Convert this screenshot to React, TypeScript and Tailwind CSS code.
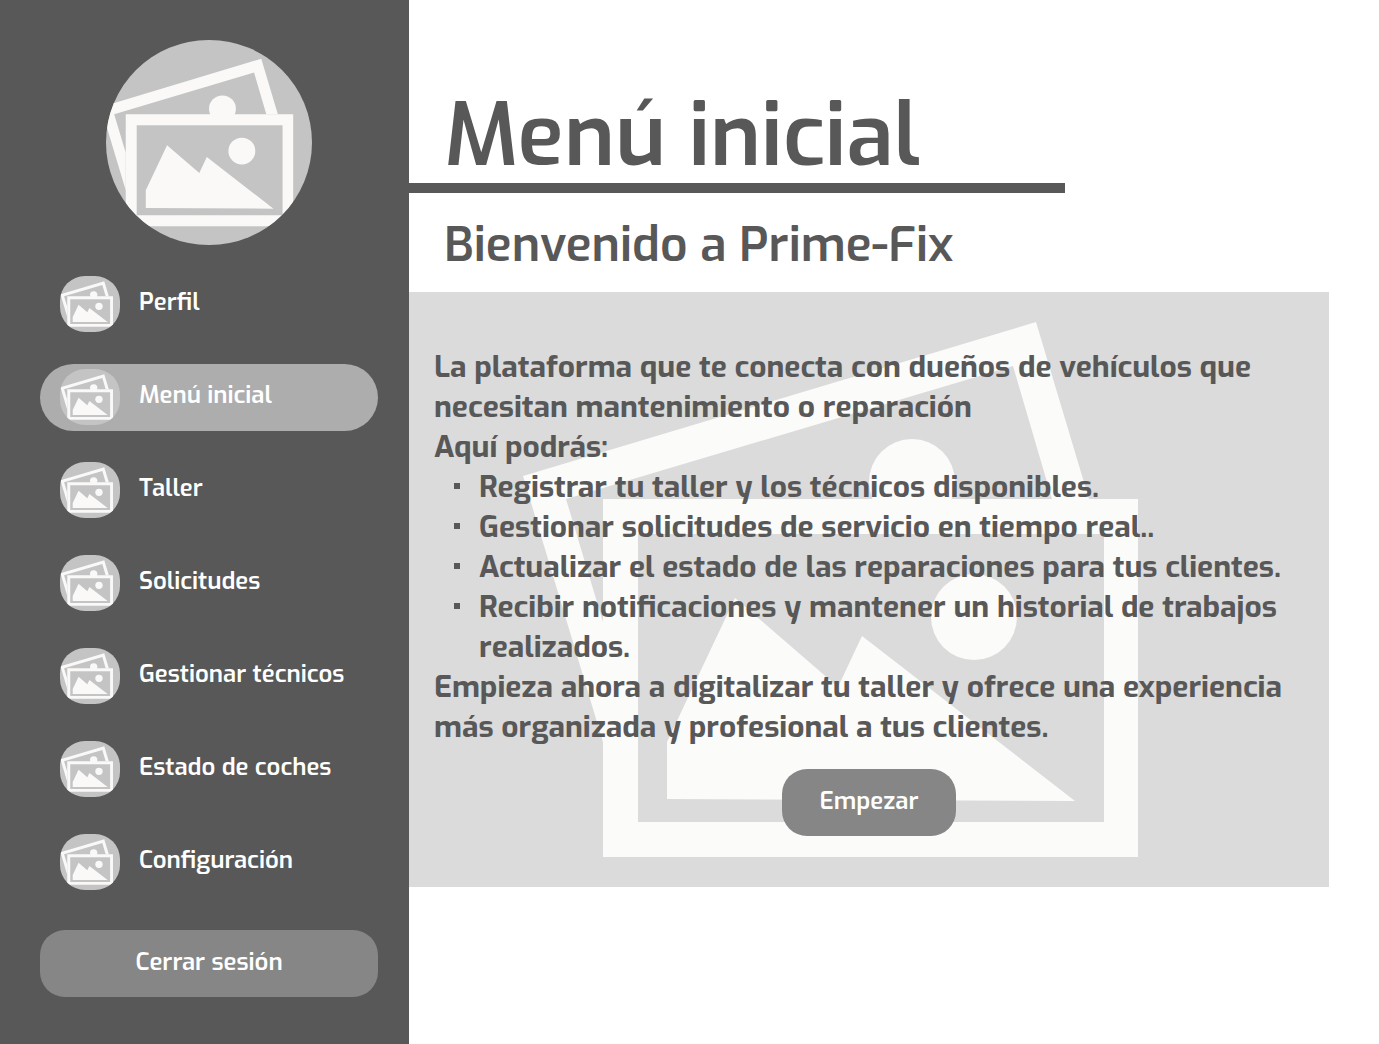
type PictureProps = { className?: string };

function Picture({ className = '' }: PictureProps) {
  return (
    <svg
      viewBox="0 0 920 655"
      preserveAspectRatio="xMidYMid slice"
      aria-hidden="true"
      className={className}
    >
      <rect width="920" height="655" fill="#c4c4c4" />
      <g fill="#faf9f8">
        <path
          fillRule="evenodd"
          d="M114 214 L627 60 L680 237 H643 L604 104 L157 237 L194 360 V480 Z"
        />
        <circle cx="503" cy="220" r="43" />
        <path fillRule="evenodd" d="M194 237 H729 V595 H194 Z M229 272 V560 H695 V272 Z" />
        <circle cx="565" cy="355" r="43" />
        <path d="M258 480 L326 336 L429 425 L453 374 L666 539 L258 537 Z" />
      </g>
    </svg>
  );
}

const menu = [
  'Perfil',
  'Menú inicial',
  'Taller',
  'Solicitudes',
  'Gestionar técnicos',
  'Estado de coches',
  'Configuración',
];

const features = [
  'Registrar tu taller y los técnicos disponibles.',
  'Gestionar solicitudes de servicio en tiempo real..',
  'Actualizar el estado de las reparaciones para tus clientes.',
  'Recibir notificaciones y mantener un historial de trabajos realizados.',
];

export default function App() {
  return (
    <div className="flex min-h-screen bg-white font-['Exo',Roboto,sans-serif] text-[#585858]">
      <aside className="flex w-[409px] shrink-0 flex-col bg-[#585858] pt-10 pr-[31px] pb-12 pl-10 text-2xl font-semibold text-white">
        <Picture className="h-[205px] w-[206px] self-center rounded-full" />

        <nav className="mt-[26px] flex flex-col gap-[26px]">
          {menu.map((label) => (
            <a
              key={label}
              href="#"
              aria-current={label === 'Menú inicial' ? 'page' : undefined}
              className="flex h-[67px] items-start gap-[19px] rounded-full px-5 pt-[5px] aria-[current=page]:bg-[#adadad]"
            >
              <Picture className="h-14 w-[60px] shrink-0 rounded-[25px]" />
              <span className="leading-[52px] whitespace-nowrap">{label}</span>
            </a>
          ))}
        </nav>

        <button
          type="button"
          className="mt-[34px] h-[67px] rounded-[25px] bg-[#868686] pb-1 text-center"
        >
          Cerrar sesión
        </button>
      </aside>

      <main className="min-w-0 flex-1 pt-[90px] pr-[50px]">
        <h1 className="pl-[35px] text-[86px] leading-[93px] font-semibold">Menú inicial</h1>
        <div className="h-2.5 w-[656px] max-w-full bg-[#585858]" />
        <h2 className="mt-[22px] pl-[35px] text-5xl leading-[60px] font-semibold">
          Bienvenido a Prime-Fix
        </h2>

        <section className="relative mt-[17px] flex flex-col items-center pt-[55px] pb-[51px]">
          <Picture className="absolute inset-0 size-full opacity-60" />
          <div className="relative w-full pr-8 pl-[25px] text-[30px] leading-10 font-bold">
            <p>
              La plataforma que te conecta con dueños de vehículos que necesitan mantenimiento o
              reparación
            </p>
            <p>Aquí podrás:</p>
            <ul>
              {features.map((feature) => (
                <li key={feature} className="flex gap-[19px] pl-5">
                  <span className="mt-4 size-1.5 shrink-0 bg-[#585858]" />
                  <span>{feature}</span>
                </li>
              ))}
            </ul>
            <p>
              Empieza ahora a digitalizar tu taller y ofrece una experiencia más organizada y
              profesional a tus clientes.
            </p>
          </div>
          <button
            type="button"
            className="relative mt-[22px] h-[67px] w-[174px] rounded-[25px] bg-[#868686] pb-1 text-2xl font-semibold text-white"
          >
            Empezar
          </button>
        </section>
      </main>
    </div>
  );
}
